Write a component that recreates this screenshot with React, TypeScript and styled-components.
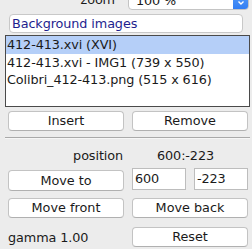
import React from 'react';
import styled, { createGlobalStyle } from 'styled-components';

const GlobalStyle = createGlobalStyle`
  html, body {
    margin: 0;
    padding: 0;
    background: #ececec;
    overflow: hidden;
  }
  body {
    font-family: 'DejaVu Sans', Verdana, sans-serif;
    font-size: 12.8px;
    letter-spacing: -0.1px;
    color: #1a1a1a;
  }
`;

const Panel = styled.div`
  width: 252px;
  height: 249px;
  display: flex;
  flex-direction: column;
  overflow: hidden;
`;

const ZoomRow = styled.div`
  display: flex;
  align-items: center;
  justify-content: flex-end;
  height: 20px;
  margin-top: -10px;
  padding-right: 3px;
  gap: 13px;
`;

const ZoomLabel = styled.span`
  line-height: 20px;
`;

const Select = styled.div`
  position: relative;
  width: 121px;
  height: 20px;
  box-sizing: border-box;
  background: #fff;
  border: 1px solid #c4c4c4;
  border-radius: 4px;
  display: flex;
  align-items: center;
  padding-left: 7px;
  overflow: hidden;
`;

const SelectArrow = styled.div`
  position: absolute;
  top: -1px;
  right: -1px;
  bottom: -1px;
  width: 16px;
  border-radius: 0 4px 4px 0;
  background: linear-gradient(#5fa2f8, #2f7cf4);
  display: flex;
  align-items: center;
  justify-content: center;
`;

const TitleField = styled.div`
  margin: 4px 9px 0;
  height: 19px;
  box-sizing: border-box;
  background: #fff;
  border: 1px solid #c8c8c8;
  border-radius: 4px;
  padding-left: 2px;
  line-height: 17px;
  color: #1e1e8e;
`;

const List = styled.div`
  margin: 2px 2px 0 5px;
  height: 72px;
  box-sizing: border-box;
  background: #fff;
  border: 1px solid #4a4a4a;
  display: flex;
  flex-direction: column;
`;

const ListRow = styled.div<{ $selected?: boolean }>`
  height: 17.5px;
  line-height: 17.5px;
  padding-left: 1px;
  white-space: nowrap;
  background: ${(p) => (p.$selected ? '#b5cff8' : 'transparent')};
`;

const Row = styled.div<{ $top: number; $height: number }>`
  display: grid;
  grid-template-columns: 116px 116px;
  column-gap: 8px;
  margin: ${(p) => p.$top}px 0 0 8px;
  height: ${(p) => p.$height}px;
  align-items: center;
`;

const Button = styled.button<{ $tall?: boolean }>`
  height: ${(p) => (p.$tall ? 21 : 20)}px;
  align-self: ${(p) => (p.$tall ? 'end' : 'center')};
  box-sizing: border-box;
  background: #fff;
  border: 1px solid #c3c3c3;
  border-bottom-color: #b0b0b0;
  border-radius: 4px;
  font: inherit;
  color: #1a1a1a;
  padding: 0;
  line-height: 18px;
`;

const Separator = styled.div`
  margin: 6px 2px 0 5px;
  height: 1px;
  background: #a9a9a9;
  border-bottom: 1px solid #f6f6f6;
`;

const LabelRight = styled.span`
  text-align: right;
  padding-right: 1px;
`;

const Value = styled.span`
  padding-left: 25px;
`;

const Inputs = styled.div`
  display: flex;
  gap: 8px;
  align-self: start;
`;

const Input = styled.div`
  flex: 1;
  height: 22px;
  box-sizing: border-box;
  background: #fff;
  border: 1px solid #bdbdbd;
  padding-left: 2px;
  line-height: 20px;
`;

const Plain = styled.span`
  padding-left: 0;
`;

const images = [
  '412-413.xvi (XVI)',
  '412-413.xvi - IMG1 (739 x 550)',
  'Colibri_412-413.png (515 x 616)',
];

export default function App() {
  return (
    <>
      <GlobalStyle />
      <Panel>
        <ZoomRow>
          <ZoomLabel>zoom</ZoomLabel>
          <Select>
            <span>100 %</span>
            <SelectArrow>
              <svg width="8" height="12" viewBox="0 0 8 12">
                <path d="M1.5 4.5 L4 2 L6.5 4.5 M1.5 7.5 L4 10 L6.5 7.5" fill="none" stroke="#fff" strokeWidth="1.4" />
              </svg>
            </SelectArrow>
          </Select>
        </ZoomRow>
        <TitleField>Background images</TitleField>
        <List>
          {images.map((name, i) => (
            <ListRow key={name} $selected={i === 0}>
              {name}
            </ListRow>
          ))}
        </List>
        <Row $top={4} $height={20}>
          <Button>Insert</Button>
          <Button>Remove</Button>
        </Row>
        <Separator />
        <Row $top={7} $height={18}>
          <LabelRight>position</LabelRight>
          <Value>600:-223</Value>
        </Row>
        <Row $top={4} $height={23}>
          <Button $tall>Move to</Button>
          <Inputs>
            <Input>600</Input>
            <Input>-223</Input>
          </Inputs>
        </Row>
        <Row $top={7} $height={20}>
          <Button>Move front</Button>
          <Button>Move back</Button>
        </Row>
        <Row $top={9} $height={19}>
          <Plain>gamma 1.00</Plain>
          <Button>Reset</Button>
        </Row>
      </Panel>
    </>
  );
}
